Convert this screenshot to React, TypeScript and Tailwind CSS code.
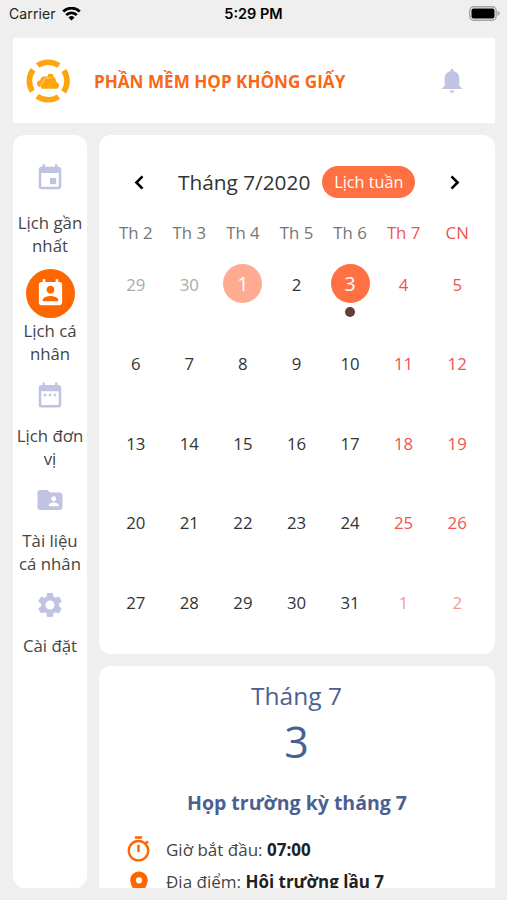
import clsx from "clsx"
import {
  MdDateRange,
  MdEvent,
  MdFolderShared,
  MdLocationOn,
  MdOutlineTimer,
  MdPermContactCalendar,
  MdSettings,
} from "react-icons/md"

const menu = [
  { label: "Lịch gần nhất", icon: MdEvent },
  { label: "Lịch cá nhân", icon: MdPermContactCalendar, active: true },
  { label: "Lịch đơn vị", icon: MdDateRange },
  { label: "Tài liệu cá nhân", icon: MdFolderShared },
  { label: "Cài đặt", icon: MdSettings },
]

const weekdays = ["Th 2", "Th 3", "Th 4", "Th 5", "Th 6", "Th 7", "CN"]

// Monday 29/6 up to Sunday 2/8
const days = Array.from({ length: 35 }, (_, i) => {
  const n = i - 1
  if (n < 1) return { day: 30 + n, outside: true }
  if (n > 31) return { day: n - 31, outside: true }
  return { day: n, outside: false }
})

function StatusBar() {
  return (
    <div className="relative flex h-[38px] shrink-0 items-start justify-between pt-1.5 pl-[9px] pr-[7px] font-[Inter] text-black">
      <div className="flex items-center gap-1.5">
        <span className="text-[14px] leading-4 tracking-[0.1px] text-[#222]">Carrier</span>
        <svg width="19" height="14" viewBox="0 0 19 14" fill="none" stroke="currentColor" strokeWidth="2.7">
          <path d="M1.200 4.500a11.800 11.800 0 0 1 16.600 0" />
          <path d="M4.200 8a7.600 7.600 0 0 1 10.600 0" />
          <path d="M9.500 13.500 6.500 10.500a4.300 4.300 0 0 1 6 0z" fill="currentColor" stroke="none" />
        </svg>
      </div>
      <span className="absolute left-1/2 top-1.5 -translate-x-1/2 whitespace-nowrap text-[14.500px] font-semibold leading-4">
        5:29 PM
      </span>
      <svg width="31" height="15" viewBox="0 0 31 15">
        <rect x="0.8" y="0.8" width="26.4" height="13.4" rx="4" fill="#efefef" stroke="#a3a3a3" strokeWidth="1.4" />
        <rect x="2.5" y="2.5" width="23" height="10" rx="2" fill="#000" />
        <path d="M28.6 5v5c1.300-.5 2.100-1.400 2.100-2.500s-.8-2-2.100-2.500z" fill="#a3a3a3" />
      </svg>
    </div>
  )
}

function Logo() {
  return (
    <svg width="44" height="44" viewBox="0 0 44 44">
      <circle
        cx="22.2"
        cy="22"
        r="18.800"
        fill="none"
        stroke="#fda50f"
        strokeWidth="5.600"
        strokeDasharray="22.500 7.031"
        transform="rotate(-124.300 22.200 22)"
      />
      <path
        d="M15 28c-3.200 0-4.600-2.300-3.900-4.500.5-1.500 1.800-2.300 3.200-2.300.1-2.400 1.900-3.900 4.300-3.700h3l.9-2.700 4.400.1.500 2.900c1.800.9 2.600 2.400 2.300 4.100l2.600 2.700c1.200 1.200 1.100 2.900 0 4.100-.8.9-1.600 1.100-2.800 1.100H16.300c-.9 0-1.300-.7-1.300-1.800z"
        fill="#fda50f"
      />
      <path
        d="M14.800 28.700c-.7-2.400.4-4.600 2.300-5.200.2-2.700 1.500-4.600 4.200-4.600h4.500"
        fill="none"
        stroke="#fff"
        strokeOpacity="0.7"
        strokeWidth="0.7"
      />
    </svg>
  )
}

function Bell() {
  return (
    <svg width="20" height="24" viewBox="0 0 20 24" fill="currentColor">
      <path d="M10 0c.9 0 1.500.6 1.500 1.500v.4c3.500.8 5.800 3.600 5.800 7.300v6.600c0 1.300.9 2.100 2.700 3.300v.9H0v-.9c1.800-1.200 2.700-2 2.700-3.300V9.200c0-3.700 2.300-6.500 5.800-7.300v-.4C8.500.6 9.100 0 10 0z" />
      <path d="M7.800 21.500h4.400c0 1.400-.9 2.300-2.200 2.300s-2.200-.9-2.200-2.300z" />
    </svg>
  )
}

function Chevron({ right }: { right?: boolean }) {
  return (
    <svg
      width="10"
      height="15"
      viewBox="0 0 10 15"
      fill="none"
      stroke="#000"
      strokeWidth="2.600"
      className={clsx("shrink-0", right && "rotate-180")}
    >
      <path d="M8.500 1.300 2.400 7.500l6.100 6.200" />
    </svg>
  )
}

function Sidebar() {
  return (
    <nav className="flex w-[74px] shrink-0 flex-col items-center rounded-xl bg-white pt-[18px]">
      {menu.map(({ label, icon: Icon, active }, i) => (
        <div
          key={label}
          className={clsx("flex flex-col items-center", active ? "gap-px" : "gap-[5px]", i === 0 ? "mb-3 gap-[9px]" : "mb-[5px]")}
        >
          <div
            className={clsx(
              "flex size-[49px] items-center justify-center rounded-full",
              active ? "bg-[#fe6600] text-white" : "text-[#c0c3e2]",
            )}
          >
            <Icon size={active ? 31 : 30} />
          </div>
          <span className="w-[74px] text-center text-[16.800px] leading-[23px] text-[#444]">{label}</span>
        </div>
      ))}
    </nav>
  )
}

function Calendar() {
  return (
    <section className="h-[519px] shrink-0 rounded-xl bg-white pl-2.5 pr-[11px] pt-[31px]">
      <div className="flex h-8 items-center pl-[25px] pr-6">
        <Chevron />
        <span className="ml-[34px] whitespace-nowrap pt-px text-[20.800px] text-[#333]">Tháng 7/2020</span>
        <button className="ml-3 h-8 w-[93px] shrink-0 rounded-full bg-[#ff7043] text-[16.200px] text-white">
          Lịch tuần
        </button>
        <div className="ml-auto flex">
          <Chevron right />
        </div>
      </div>
      <div className="mt-[23px] grid grid-cols-7 text-center text-[16.800px] leading-6 text-[#757575]">
        {weekdays.map((name, i) => (
          <span key={name} className={clsx(i > 4 && "text-[#ef5350]")}>{name}</span>
        ))}
      </div>
      <div className="mt-[19px] grid grid-cols-7">
        {days.map(({ day, outside }, i) => {
          const today = i === 2
          const selected = i === 4
          const weekend = i % 7 > 4
          return (
            <div key={i} className="flex h-[79.500px] flex-col items-center">
              <span
                className={clsx(
                  "flex size-[39px] items-center justify-center rounded-full",
                  today || selected ? "pt-px text-[20px] text-white" : "pt-0.5 text-[16.800px]",
                  today && "bg-[#ffab91]",
                  selected && "bg-[#ff7043]",
                  !today && !selected && (weekend ? "text-[#ef5350]" : outside ? "text-[#aaa]" : "text-[#333]"),
                  weekend && outside && "opacity-60",
                )}
              >
                {day}
              </span>
              {selected && <span className="mt-1 size-[10px] rounded-full bg-[#5d4037]" />}
            </div>
          )
        })}
      </div>
    </section>
  )
}

function Meeting() {
  return (
    <section className="min-h-0 flex-1 overflow-hidden rounded-t-xl bg-white pt-3 text-center text-[#4a6190]">
      <p className="pr-px text-[24.500px] leading-9">Tháng 7</p>
      <p className="pr-px text-[43px] leading-[56px]">3</p>
      <p className="mt-[19px] text-[19.500px] font-bold leading-7">Họp trường kỳ tháng 7</p>
      <div className="mt-4 flex h-8 items-center pl-[25px] text-[17px] text-[#444]">
        <MdOutlineTimer size={29} className="mr-[13px] shrink-0 text-[#fe6600]" />
        <span className="pt-px">Giờ bắt đầu: <b className="text-[#222]">07:00</b></span>
      </div>
      <div className="flex h-8 items-center pl-[25px] text-[17px] text-[#444]">
        <MdLocationOn size={30} className="mr-3 mt-1.5 shrink-0 text-[#fe6600]" />
        <span className="pt-px">Địa điểm: <b className="text-[#222]">Hội trường lầu 7</b></span>
      </div>
    </section>
  )
}

export default function App() {
  return (
    <div className="flex h-[900px] w-[507px] flex-col overflow-hidden bg-[#efefef] font-['Open_Sans',sans-serif]">
      <StatusBar />
      <header className="ml-[13px] mr-3 flex h-[85px] shrink-0 items-center bg-white pl-[13px] pr-[33px]">
        <Logo />
        <h1 className="ml-6 pt-0.5 text-[17.100px] font-bold text-[#f96816]">PHẦN MỀM HỌP KHÔNG GIẤY</h1>
        <div className="ml-auto text-[#c0c3e2]">
          <Bell />
        </div>
      </header>
      <main className="mb-3 ml-[13px] mr-3 mt-3 flex min-h-0 flex-1 gap-3">
        <Sidebar />
        <div className="flex min-w-0 flex-1 flex-col gap-3">
          <Calendar />
          <Meeting />
        </div>
      </main>
    </div>
  )
}
